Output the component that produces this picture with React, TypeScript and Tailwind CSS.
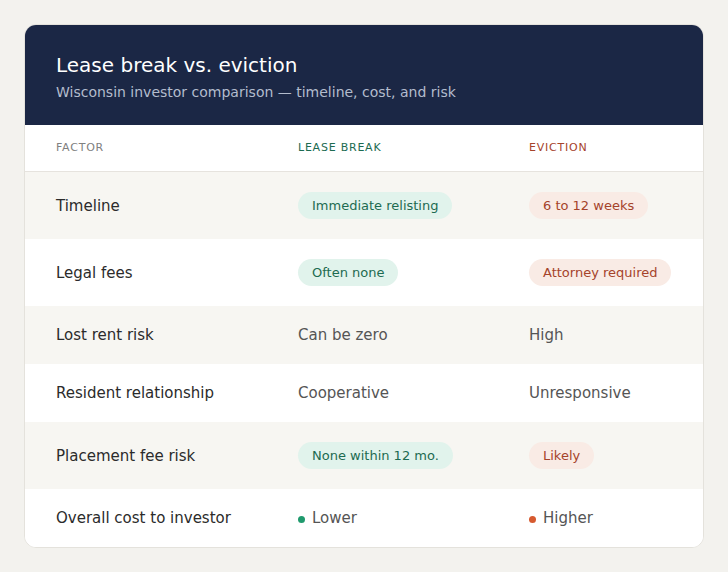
import React from "react";

type Cell =
  | { kind: "text"; value: string }
  | { kind: "pill"; value: string; tone: "good" | "bad" }
  | { kind: "dot"; value: string; tone: "good" | "bad" };

type Row = { factor: string; lease: Cell; eviction: Cell };

const rows: Row[] = [
  {
    factor: "Timeline",
    lease: { kind: "pill", value: "Immediate relisting", tone: "good" },
    eviction: { kind: "pill", value: "6 to 12 weeks", tone: "bad" },
  },
  {
    factor: "Legal fees",
    lease: { kind: "pill", value: "Often none", tone: "good" },
    eviction: { kind: "pill", value: "Attorney required", tone: "bad" },
  },
  {
    factor: "Lost rent risk",
    lease: { kind: "text", value: "Can be zero" },
    eviction: { kind: "text", value: "High" },
  },
  {
    factor: "Resident relationship",
    lease: { kind: "text", value: "Cooperative" },
    eviction: { kind: "text", value: "Unresponsive" },
  },
  {
    factor: "Placement fee risk",
    lease: { kind: "pill", value: "None within 12 mo.", tone: "good" },
    eviction: { kind: "pill", value: "Likely", tone: "bad" },
  },
  {
    factor: "Overall cost to investor",
    lease: { kind: "dot", value: "Lower", tone: "good" },
    eviction: { kind: "dot", value: "Higher", tone: "bad" },
  },
];

const CellView = ({ cell }: { cell: Cell }) => {
  if (cell.kind === "pill") {
    return (
      <span
        className={
          cell.tone === "good"
            ? "inline-flex h-[27px] items-center whitespace-nowrap rounded-full bg-[#e1f3ec] px-[14px] text-[13px] text-[#1d6b51]"
            : "inline-flex h-[27px] items-center whitespace-nowrap rounded-full bg-[#f9ebe5] px-[14px] text-[13px] text-[#a5432b]"
        }
      >
        {cell.value}
      </span>
    );
  }
  if (cell.kind === "dot") {
    return (
      <span className="inline-flex items-center gap-[7px] text-[15px] leading-[18px] text-[#555555]">
        <span
          className={
            cell.tone === "good"
              ? "mt-[3px] h-[7px] w-[7px] rounded-full bg-[#1f9a6d]"
              : "mt-[3px] h-[7px] w-[7px] rounded-full bg-[#d65a2f]"
          }
        />
        {cell.value}
      </span>
    );
  }
  return <span className="text-[15px] leading-[18px] text-[#555555]">{cell.value}</span>;
};

export default function App() {
  return (
    <div className="min-h-[572px] w-full bg-[#f3f2ee] px-6 pt-6 pb-6 font-['DejaVu_Sans',sans-serif]">
      <div className="overflow-hidden rounded-[12px] border border-[#e4e2dc] bg-white">
        <div className="flex h-[100px] flex-col justify-center bg-[#1b2745] px-[31px] pt-[3px]">
          <h1 className="text-[20px] leading-[26px] text-white">Lease break vs. eviction</h1>
          <p className="mt-[5px] text-[14px] leading-[18px] text-[#b3bccd]">
            Wisconsin investor comparison — timeline, cost, and risk
          </p>
        </div>

        <div className="grid h-[47px] grid-cols-[242px_231px_1fr] items-center border-b border-[#e6e3de] px-[31px] text-[11px] tracking-[0.07em] uppercase">
          <span className="text-[#808080]">Factor</span>
          <span className="text-[#1d6b51]">Lease break</span>
          <span className="text-[#a5432b]">Eviction</span>
        </div>

        {rows.map((row, i) => (
          <div
            key={row.factor}
            className={
              "grid grid-cols-[242px_231px_1fr] items-center px-[31px] py-5 " +
              (i % 2 === 0 ? "bg-[#f7f6f2]" : "bg-white")
            }
          >
            <span className="text-[15px] leading-[18px] text-[#2b2b2b]">{row.factor}</span>
            <div className="flex items-center">
              <CellView cell={row.lease} />
            </div>
            <div className="flex items-center">
              <CellView cell={row.eviction} />
            </div>
          </div>
        ))}
      </div>
    </div>
  );
}
